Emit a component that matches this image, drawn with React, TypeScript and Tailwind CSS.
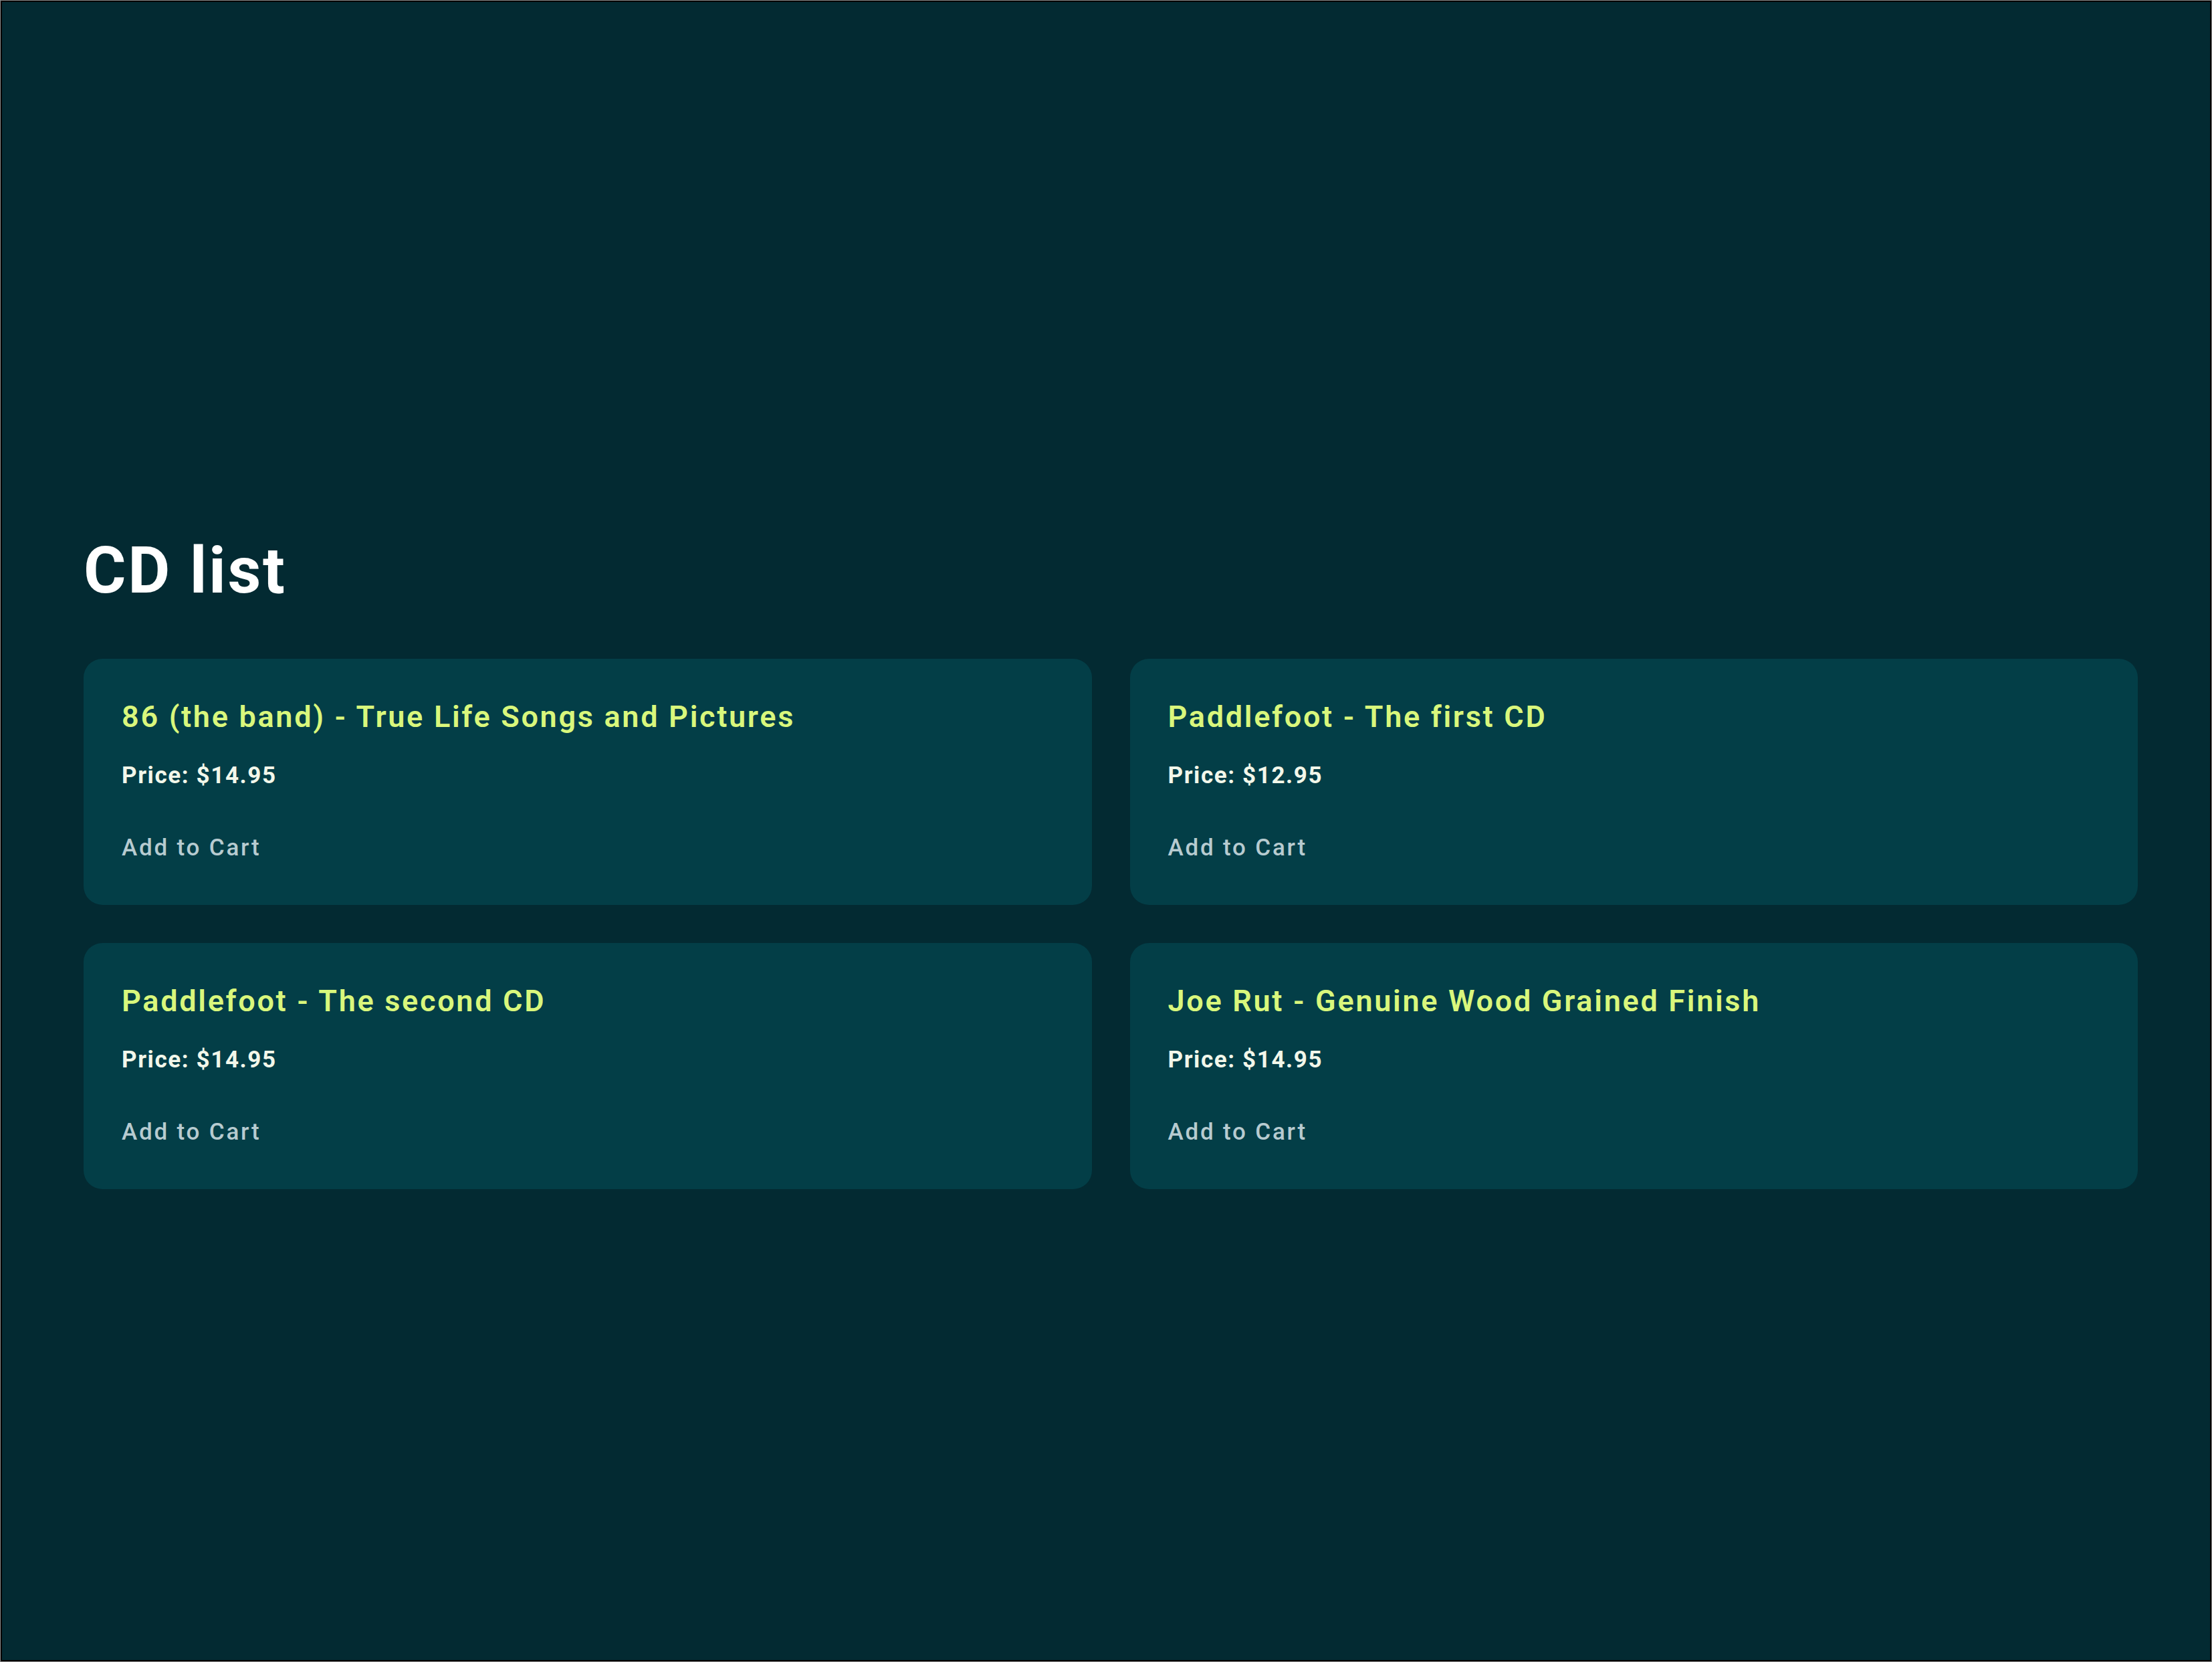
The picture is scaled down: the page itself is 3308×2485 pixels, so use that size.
import React from "react";

const cds = [
  { title: "86 (the band) - True Life Songs and Pictures", price: "$14.95" },
  { title: "Paddlefoot - The first CD", price: "$12.95" },
  { title: "Paddlefoot - The second CD", price: "$14.95" },
  { title: "Joe Rut - Genuine Wood Grained Finish", price: "$14.95" },
];

export default function App() {
  return (
    <div className="h-[2485px] w-full bg-[#8a8a8a] p-px">
      <div
        className="h-full w-full border-2 border-black bg-[#032a32]"
        style={{ fontFamily: "Roboto, 'Liberation Sans', sans-serif" }}
      >
        <div className="pl-[122px] pt-[802px]">
          <h1 className="text-[97px] font-bold leading-none tracking-[2.7px] text-white">
            CD list
          </h1>
          <div className="mt-[83px] grid w-[3072px] grid-cols-2 gap-[57px]">
            {cds.map((cd) => (
              <div
                key={cd.title}
                className="rounded-[28px] bg-[#033e47] px-[57px] pt-[64px] pb-[68px]"
              >
                <h2 className="text-[45px] font-semibold leading-none tracking-[2.7px] text-[#d9f77c]">
                  {cd.title}
                </h2>
                <p className="mt-[48px] text-[35px] font-bold leading-none tracking-[1.6px] text-[#f2f7ea]">
                  Price: {cd.price}
                </p>
                <button className="mt-[73px] block text-[35px] font-medium leading-none tracking-[2.8px] text-[#b7cbd0]">
                  Add to Cart
                </button>
              </div>
            ))}
          </div>
        </div>
      </div>
    </div>
  );
}
